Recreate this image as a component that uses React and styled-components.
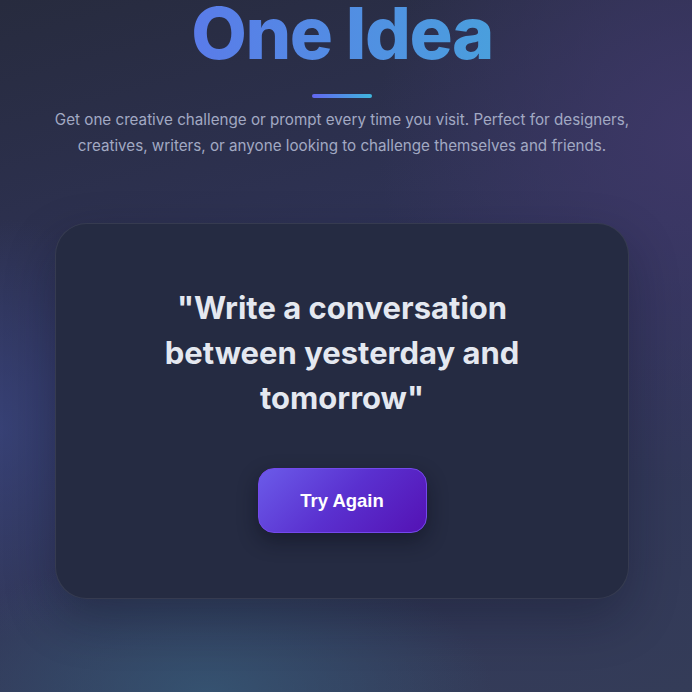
import React from "react";
import styled, { createGlobalStyle } from "styled-components";

const GlobalStyle = createGlobalStyle`
  html, body {
    margin: 0;
    padding: 0;
  }
  body {
    font-family: "Inter", "Noto Sans", sans-serif;
    background: #2c3150;
  }
`;

const Page = styled.div`
  width: 100%;
  min-height: 692px;
  box-sizing: border-box;
  display: flex;
  flex-direction: column;
  align-items: center;
  padding: 0 24px 80px 16px;
  overflow: hidden;
  background:
    radial-gradient(ellipse 380px 190px at 30% 100%, rgba(54, 88, 118, 0.8), transparent 75%),
    radial-gradient(ellipse 240px 300px at 0% 62%, rgba(58, 70, 128, 0.7), transparent 70%),
    radial-gradient(ellipse 420px 460px at 100% 20%, rgba(62, 56, 104, 0.95), transparent 75%),
    linear-gradient(165deg, #272b3e 0%, #30345a 45%, #343c58 100%);
`;

const Title = styled.h1`
  margin: -3px 0 0;
  font-size: 72px;
  line-height: 1;
  font-weight: 800;
  letter-spacing: -0.02em;
  background: linear-gradient(90deg, #5a7be9 0%, #4a9fdd 100%);
  -webkit-background-clip: text;
  background-clip: text;
  color: transparent;
`;

const Underline = styled.div`
  width: 60px;
  height: 4px;
  border-radius: 2px;
  margin-top: 25px;
  background: linear-gradient(90deg, #6366f1, #3fb6dc);
`;

const Subtitle = styled.p`
  margin: 9px 0 0;
  max-width: 600px;
  text-align: center;
  font-size: 15.2px;
  line-height: 26px;
  color: #a2a9c3;
`;

const Card = styled.section`
  margin-top: 64px;
  width: 574px;
  height: 376px;
  flex-shrink: 0;
  box-sizing: border-box;
  border-radius: 32px;
  border: 1px solid rgba(255, 255, 255, 0.08);
  background: #252b42;
  box-shadow: 0 20px 50px rgba(10, 14, 30, 0.3);
  display: flex;
  flex-direction: column;
  align-items: center;
  padding: 61px 40px 0;
`;

const Prompt = styled.h2`
  margin: 0;
  max-width: 400px;
  text-align: center;
  font-size: 31px;
  line-height: 45px;
  font-weight: 700;
  color: #e4e8f0;
`;

const Button = styled.button`
  margin-top: 48px;
  width: 169px;
  height: 65px;
  border-radius: 16px;
  border: 1px solid #7448ec;
  background: linear-gradient(135deg, #6b5be9 0%, #5a30cf 50%, #5412b4 100%);
  color: #ffffff;
  font-family: "Liberation Sans", Arial, sans-serif;
  font-size: 18.5px;
  font-weight: 700;
  box-shadow: 0 8px 20px rgba(8, 10, 24, 0.45);
  cursor: pointer;
`;

export default function App() {
  return (
    <>
      <GlobalStyle />
      <Page>
        <Title>One Idea</Title>
        <Underline />
        <Subtitle>
          Get one creative challenge or prompt every time you visit. Perfect for
          designers, creatives, writers, or anyone looking to challenge
          themselves and friends.
        </Subtitle>
        <Card>
          <Prompt>"Write a conversation between yesterday and tomorrow"</Prompt>
          <Button>Try Again</Button>
        </Card>
      </Page>
    </>
  );
}
